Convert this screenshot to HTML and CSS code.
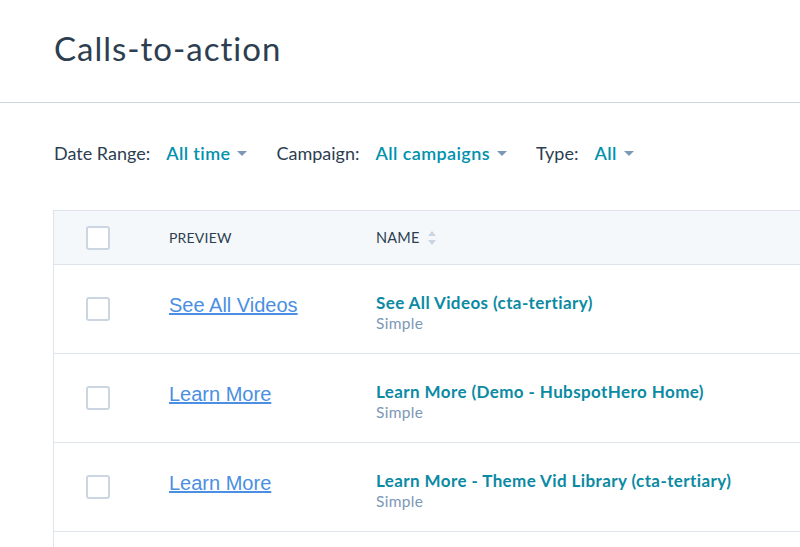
FILE: index.html
```html
<!DOCTYPE html>
<html>
<head>
<meta charset="utf-8">
<link rel="stylesheet" href="styles.css">
</head>
<body>
<div class="page">
  <header class="page-header">
    <h1 class="title">Calls-to-action</h1>
  </header>
  <div class="filters">
    <div class="filter"><span class="filter-label">Date Range:</span><span class="filter-value">All time</span><span class="caret"></span></div>
    <div class="filter"><span class="filter-label">Campaign:</span><span class="filter-value">All campaigns</span><span class="caret"></span></div>
    <div class="filter"><span class="filter-label">Type:</span><span class="filter-value">All</span><span class="caret"></span></div>
  </div>
  <div class="table">
    <div class="row head">
      <div class="cell check"><span class="checkbox"></span></div>
      <div class="cell preview">PREVIEW</div>
      <div class="cell name">NAME
        <svg class="sort" width="10" height="16" viewBox="0 0 10 16"><path d="M5 1 L9 6 L1 6 Z" fill="#cbd6e2"/><path d="M5 15 L9 10 L1 10 Z" fill="#cbd6e2"/></svg>
      </div>
    </div>
    <div class="row">
      <div class="cell check"><span class="checkbox"></span></div>
      <div class="cell preview"><a class="cta-link">See All Videos</a></div>
      <div class="cell name"><div class="cta-name">See All Videos (cta-tertiary)</div><div class="cta-type">Simple</div></div>
    </div>
    <div class="row">
      <div class="cell check"><span class="checkbox"></span></div>
      <div class="cell preview"><a class="cta-link">Learn More</a></div>
      <div class="cell name"><div class="cta-name">Learn More (Demo - HubspotHero Home)</div><div class="cta-type">Simple</div></div>
    </div>
    <div class="row">
      <div class="cell check"><span class="checkbox"></span></div>
      <div class="cell preview"><a class="cta-link">Learn More</a></div>
      <div class="cell name"><div class="cta-name">Learn More - Theme Vid Library (cta-tertiary)</div><div class="cta-type">Simple</div></div>
    </div>
    <div class="row"></div>
  </div>
</div>
</body>
</html>
```
FILE: styles.css
```css
html, body {
  margin: 0;
  padding: 0;
  background: #ffffff;
  overflow: hidden;
}
body {
  font-family: Lato, "Noto Sans", sans-serif;
  color: #33475b;
}
.page {
  width: 800px;
  height: 547px;
  overflow: hidden;
}
.page-header {
  height: 102px;
  border-bottom: 1px solid #cbd6e2;
  padding-left: 54px;
  box-sizing: content-box;
}
.title {
  margin: 0;
  padding-top: 26px;
  font-size: 33px;
  letter-spacing: 1px;
  font-weight: 400;
  line-height: 44px;
  color: #2d3e50;
}
.filters {
  display: flex;
  align-items: center;
  padding: 38px 0 0 54px;
  height: 24px;
}
.filter {
  display: flex;
  align-items: center;
  margin-right: 29px;
  font-size: 18px;
}
.filter-label {
  color: #2d3e50;
  margin-right: 16px;
}
.filter-value {
  color: #0091ae;
  font-weight: 600;
  letter-spacing: 0.4px;
}
.caret {
  width: 0;
  height: 0;
  border-left: 5px solid transparent;
  border-right: 5px solid transparent;
  border-top: 5px solid #7c98b6;
  margin-left: 7px;
  margin-top: 1px;
}
.table {
  margin: 45px 0 0 53px;
  width: 800px;
  border-left: 1px solid #dfe3eb;
  border-top: 1px solid #dfe3eb;
}
.row {
  display: flex;
  align-items: center;
  height: 88px;
  border-bottom: 1px solid #dfe3eb;
}
.row.head {
  height: 53px;
  background: #f5f8fa;
  border-bottom: 1px solid #dfe3eb;
  font-size: 14px;
  letter-spacing: 0.2px;
  color: #2d3e50;
}
.cell.check {
  width: 82px;
  padding-left: 32px;
  box-sizing: border-box;
}
.checkbox {
  display: block;
  width: 20px;
  height: 20px;
  border: 2px solid #cbd6e2;
  border-radius: 3px;
  background: #fff;
}
.cell.preview {
  width: 240px;
  padding-left: 33px;
  box-sizing: border-box;
}
.row:not(.head) .cell.preview {
  margin-top: -7px;
}
.cell.name {
  display: flex;
  flex-direction: column;
}
.row.head .cell.name {
  flex-direction: row;
  align-items: center;
  font-size: 14.5px;
}
.sort {
  margin-left: 7px;
}
.cta-link {
  font-family: "Liberation Sans", Arial, sans-serif;
  font-size: 20px;
  color: #4a8fe2;
  text-decoration: underline;
}
.cta-name {
  color: #0b8aa3;
  font-weight: 700;
  font-size: 17px;
  letter-spacing: 0.4px;
  line-height: 20px;
  margin-top: 8px;
}
.cta-type {
  color: #7c98b6;
  font-size: 15.5px;
  letter-spacing: 0.3px;
  line-height: 20px;
}
```
